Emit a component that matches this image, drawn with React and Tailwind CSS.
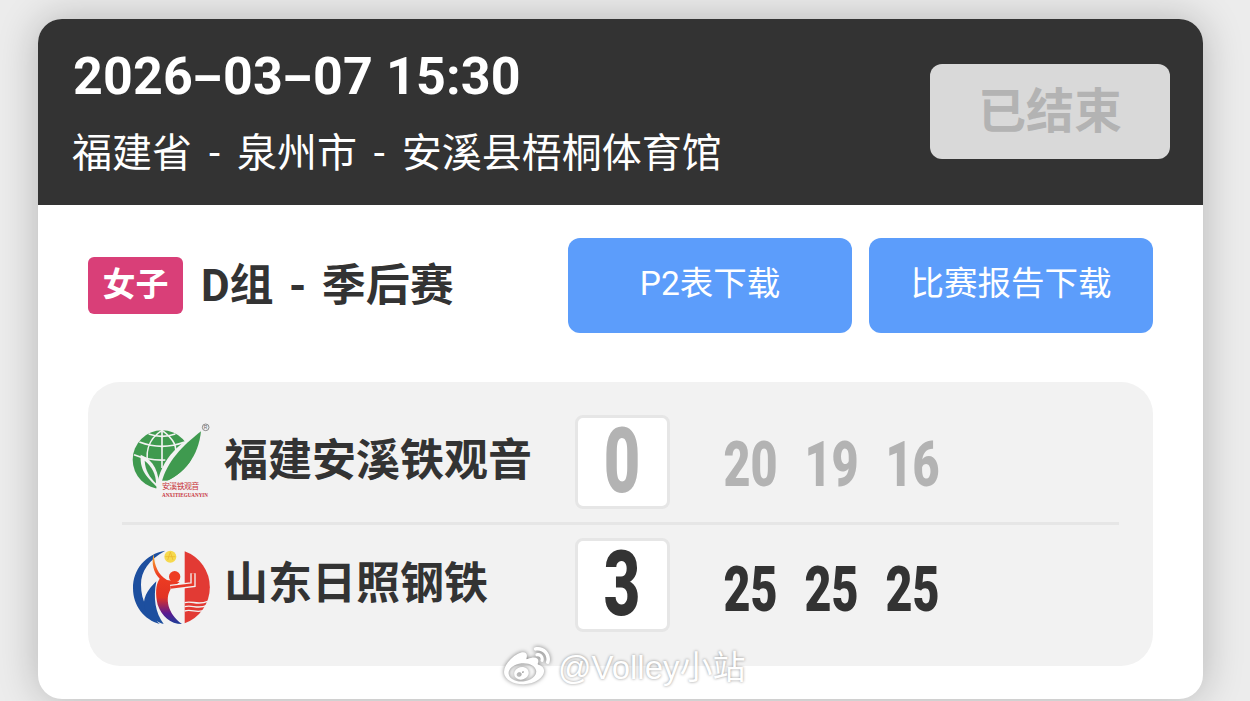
import React from "react";
import { FaWeibo } from "react-icons/fa";

const CJK = "font-['Roboto','Noto_Sans_CJK_SC',sans-serif]";

function TeaLogo() {
  return (
    <svg viewBox="40 35 240 240" className="w-[80px] h-[80px] shrink-0">
      <circle cx="130" cy="145" r="88" fill="#3f9a4f" />
      <g fill="none" stroke="#f2f2f2" strokeWidth="5">
        <path d="M130 57C85 85 78 130 92 175" />
        <path d="M130 57C170 85 175 110 170 135" />
        <path d="M130 57V170" />
        <path d="M62 92Q130 118 198 92" />
        <path d="M46 130Q90 148 140 146" />
        <path d="M90 68Q130 82 170 68" />
      </g>
      <path d="M250 55C195 90 125 130 112 238L130 238C140 170 190 110 250 55Z" fill="#f2f2f2" />
      <path d="M247 60C240 130 200 190 130 215L122 240H262V60Z" fill="#f2f2f2" />
      <path d="M247 60C240 130 200 190 128 216C145 150 190 105 247 60Z" fill="#3f9a4f" />
      <path d="M66 130C105 145 124 185 120 232C95 205 62 185 66 130Z" fill="#f2f2f2" />
      <path d="M78 148C100 165 112 190 112 216C94 198 80 180 78 148Z" fill="#3f9a4f" />
      <rect x="125" y="208" width="125" height="57" fill="#f2f2f2" />
      <text x="130" y="232" fontSize="24" fill="#c8343c" fontFamily="'Noto Sans CJK SC',sans-serif" textLength="112">安溪铁观音</text>
      <text x="130" y="258" fontSize="17" fontWeight="700" fill="#c8343c" fontFamily="'Liberation Serif',serif" textLength="138" lengthAdjust="spacingAndGlyphs">ANXITIEGUANYIN</text>
      <circle cx="261" cy="48" r="10" fill="none" stroke="#777" strokeWidth="2.5" />
      <text x="261" y="54" fontSize="15" textAnchor="middle" fill="#666" fontFamily="'Liberation Sans',sans-serif">R</text>
    </svg>
  );
}

function SunLogo() {
  return (
    <svg viewBox="35 40 240 240" className="w-[80px] h-[80px] shrink-0">
      <defs>
        <linearGradient id="pl" x1="0" y1="0" x2="0" y2="1">
          <stop offset="0" stopColor="#f7b733" />
          <stop offset="0.3" stopColor="#ee3d22" />
          <stop offset="0.62" stopColor="#e23323" />
          <stop offset="0.85" stopColor="#5b1a91" />
          <stop offset="1" stopColor="#1b3f98" />
        </linearGradient>
      </defs>
      <path d="M135 48C75 58 38 105 38 160C38 215 72 255 118 268C85 235 62 200 62 150C62 110 85 75 135 48Z" fill="#1d4f9f" />
      <path d="M108 140C82 165 62 195 75 225C85 248 110 262 130 268C105 235 98 190 108 140Z" fill="#1d4f9f" />
      <path d="M100 58C103 95 112 118 140 136L178 142L150 165C135 190 140 235 185 268C150 268 125 245 112 210C105 180 105 150 118 132C100 115 92 85 100 58Z" fill="url(#pl)" />
      <circle cx="163" cy="126" r="17" fill="#ee3d22" />
      <circle cx="150" cy="66" r="18" fill="#f6d94d" />
      <path d="M150 52L142 76M150 52L158 76M135 66H165" stroke="#eab32c" strokeWidth="2" fill="none" />
      <path d="M193 50A115 115 0 0 1 193 266Z" fill="#e23a34" />
      <path d="M150 158L218 150L218 116" fill="none" stroke="#f2f2f2" strokeWidth="16" />
      <path d="M150 158L218 150L218 116" fill="none" stroke="#e8392a" strokeWidth="8" />
      <g fill="none" stroke="#f2f2f2" strokeWidth="4">
        <path d="M193 204C215 196 230 214 262 200" />
        <path d="M193 216C215 208 230 226 260 212" />
        <path d="M193 229C215 221 230 239 255 225" />
      </g>
    </svg>
  );
}

function Sets({ vals, color, offset }) {
  return (
    <div className={`flex ml-[40px] ${offset}`}>
      {vals.map((v, i) => (
        <div key={i} className={`w-[81px] flex justify-center text-[63px] leading-none font-black ${color}`}>
          <span className="inline-block scale-x-[0.74]">{v}</span>
        </div>
      ))}
    </div>
  );
}

function Row({ logo, logoOffset, name, score, sets, color, setsOffset, className }) {
  return (
    <div className={`flex items-center ${className}`}>
      <div className={`w-[102px] pl-[10px] shrink-0 ${logoOffset}`}>{logo}</div>
      <div className="w-[351px] shrink-0 text-[#333] text-[44px] font-bold leading-none -mt-[3px]">{name}</div>
      <div className={`w-[95px] h-[94px] shrink-0 bg-white border-[3px] border-[#e6e6e6] rounded-[8px] flex items-center justify-center text-[90px] leading-none font-black ${color}`}>
        <span className="inline-block scale-x-[0.7]">{score}</span>
      </div>
      <Sets vals={sets} color={color} offset={setsOffset} />
    </div>
  );
}

function Dash() {
  return <span className="inline-block w-[30px] text-center scale-x-[1.7]">-</span>;
}

export default function App() {
  return (
    <div className={`relative min-h-screen h-[701px] overflow-hidden bg-[#ececec] pt-[19px] px-[38px] ${CJK}`}>
      <div className="w-[1165px] h-[680px] bg-white rounded-[24px] overflow-hidden shadow-[0_0_40px_rgba(0,0,0,0.24)]">
        <div className="h-[186px] bg-[#333333] flex items-center justify-between pl-[35px] pr-[33px]">
          <div className="text-white">
            <div className="text-[52px] leading-[60px] font-bold tracking-[0.15px]">2026<Dash />03<Dash />07 15:30</div>
            <div className="text-[40px] leading-[56px] mt-[19px] -mb-[5px] -ml-[1px] font-normal [word-spacing:7px]">福建省 - 泉州市 - 安溪县梧桐体育馆</div>
          </div>
          <div className="w-[240px] h-[95px] -mt-[1px] rounded-[12px] bg-[#d9d9d9] text-[#b3b3b3] text-[48px] font-bold flex items-center justify-center">已结束</div>
        </div>
        <div className="px-[50px] pt-[33px]">
          <div className="flex items-center">
            <div className="w-[95px] h-[57px] mt-[-1px] rounded-[6px] bg-[#d93f78] text-white text-[33px] font-bold flex items-center justify-center">女子</div>
            <div className="ml-[18px] text-[44px] font-bold text-[#333] leading-none flex-1 [word-spacing:4.5px]">D组 - 季后赛</div>
            <div className="w-[284px] h-[95px] pb-[2px] rounded-[12px] bg-[#5c9dfb] text-white text-[33.5px] flex items-center justify-center">P2表下载</div>
            <div className="w-[284px] h-[95px] pb-[2px] ml-[17px] rounded-[12px] bg-[#5c9dfb] text-white text-[33.5px] flex items-center justify-center">比赛报告下载</div>
          </div>
          <div className="mt-[49px] bg-[#f2f2f2] rounded-[32px] px-[34px] pt-[33px] pb-[34px]">
            <Row logo={<TeaLogo />} logoOffset="mt-[2px]" name="福建安溪铁观音" score="0" sets={["20", "19", "16"]} color="text-[#b3b3b3]" setsOffset="pt-[5px]" className="pb-[13px] border-b-[3px] border-[#e6e6e6]" />
            <Row logo={<SunLogo />} logoOffset="mt-[6px]" name="山东日照钢铁" score="3" sets={["25", "25", "25"]} color="text-[#333]" setsOffset="pt-[9px]" className="pt-[13px]" />
          </div>
        </div>
      </div>
      <div className="absolute left-[502px] top-[644px] flex items-center text-white text-[33px] leading-none [text-shadow:0_0_3px_rgba(0,0,0,0.45)]">
        <FaWeibo className="w-[50px] h-[46px] drop-shadow-[0_0_2px_rgba(0,0,0,0.5)]" />
        <span className="ml-[6px] font-['Liberation_Sans','Noto_Sans_CJK_SC',sans-serif]">@Volley小站</span>
      </div>
    </div>
  );
}
